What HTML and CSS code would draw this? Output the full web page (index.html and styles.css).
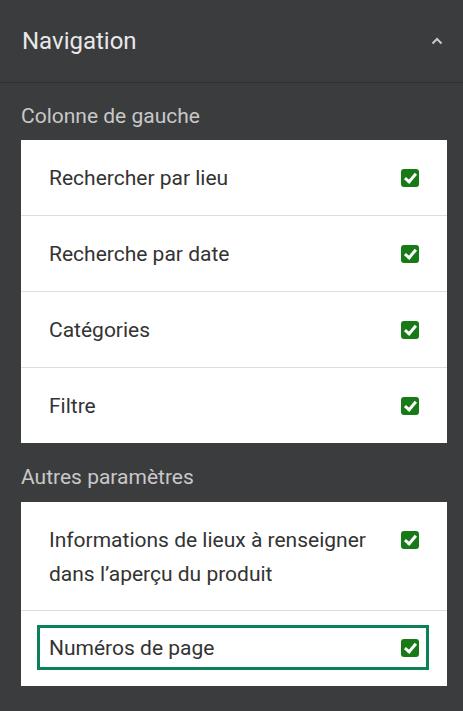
FILE: index.html
```html
<!DOCTYPE html>
<html lang="fr">

<head>
    <meta charset="UTF-8">
    <meta name="viewport" content="width=device-width, initial-scale=1.0">
    <title>Navigation</title>
    <link rel="stylesheet" href="styles.css">
</head>

<body>
    <div class="panel">
        <div class="panel-header">
            <h2 class="panel-title">Navigation</h2>
            <svg class="chevron" width="12" height="8" viewBox="0 0 12 8">
                <polyline points="1.5,6.5 6,2 10.5,6.5" fill="none" stroke="#c9c9c9" stroke-width="2" />
            </svg>
        </div>

        <!-- Colonne de gauche -->
        <div class="section-label">Colonne de gauche</div>
        <ul class="option-list">
            <li class="option-row">
                <span class="option-text">Rechercher par lieu</span>
                <span class="check"><span class="check-box"></span></span>
            </li>
            <li class="option-row">
                <span class="option-text">Recherche par date</span>
                <span class="check"><span class="check-box"></span></span>
            </li>
            <li class="option-row">
                <span class="option-text">Catégories</span>
                <span class="check"><span class="check-box"></span></span>
            </li>
            <li class="option-row">
                <span class="option-text">Filtre</span>
                <span class="check"><span class="check-box"></span></span>
            </li>
        </ul>

        <!-- Autres paramètres -->
        <div class="section-label">Autres paramètres</div>
        <ul class="option-list">
            <li class="option-row multi-line">
                <span class="option-text">Informations de lieux à renseigner dans l’aperçu du produit</span>
                <span class="check"><span class="check-box"></span></span>
            </li>
            <li class="option-row focused-row">
                <div class="focus-box">
                    <span class="option-text">Numéros de page</span>
                    <span class="check"><span class="check-box"></span></span>
                </div>
            </li>
        </ul>
    </div>
</body>

</html>
```

FILE: styles.css
```css
* {
    margin: 0;
    padding: 0;
    box-sizing: border-box;
}

body {
    background-color: #3b3c3e;
    font-family: Roboto, "Liberation Sans", sans-serif;
    width: 463px;
    height: 711px;
    overflow: hidden;
}

.panel-header {
    height: 83px;
    border-bottom: 1px solid #2f3032;
    display: flex;
    align-items: center;
    justify-content: space-between;
    padding: 0 20px 0 22px;
}

.panel-title {
    font-size: 24px;
    font-weight: 400;
    color: #e8e8e8;
}

.chevron {
    display: block;
}

.section-label {
    font-size: 21px;
    line-height: 24px;
    color: #c8c8c8;
    margin: 21px 21px 12px;
}

.option-list + .section-label {
    margin-top: 22px;
    margin-bottom: 13px;
}

.option-list {
    list-style: none;
    background-color: #fff;
    margin: 0 16px 0 21px;
}

.option-row {
    display: flex;
    align-items: flex-start;
    justify-content: space-between;
    padding: 21px 28px 20px;
    border-top: 1px solid #dddddd;
}

.option-row:first-child {
    border-top: none;
}

.multi-line {
    padding-bottom: 19px;
}

.option-text {
    font-size: 21px;
    line-height: 34px;
    color: #333333;
    max-width: 340px;
}

.check {
    height: 34px;
    display: flex;
    align-items: center;
    margin-left: 16px;
}

.check-box {
    width: 18px;
    height: 18px;
    border-radius: 3px;
    background-color: #177a17;
    position: relative;
}

/* coche blanche */
.check-box::after {
    content: "";
    position: absolute;
    left: 6px;
    top: 2px;
    width: 4px;
    height: 9px;
    border-right: 3px solid #fff;
    border-bottom: 3px solid #fff;
    transform: rotate(40deg);
}

.focused-row {
    padding: 14px 18px 16px 16px;
}

.focus-box {
    flex: 1;
    display: flex;
    align-items: flex-start;
    justify-content: space-between;
    border: 3px solid #0a8156;
    padding: 3px 7px 2px 9px;
}
```
